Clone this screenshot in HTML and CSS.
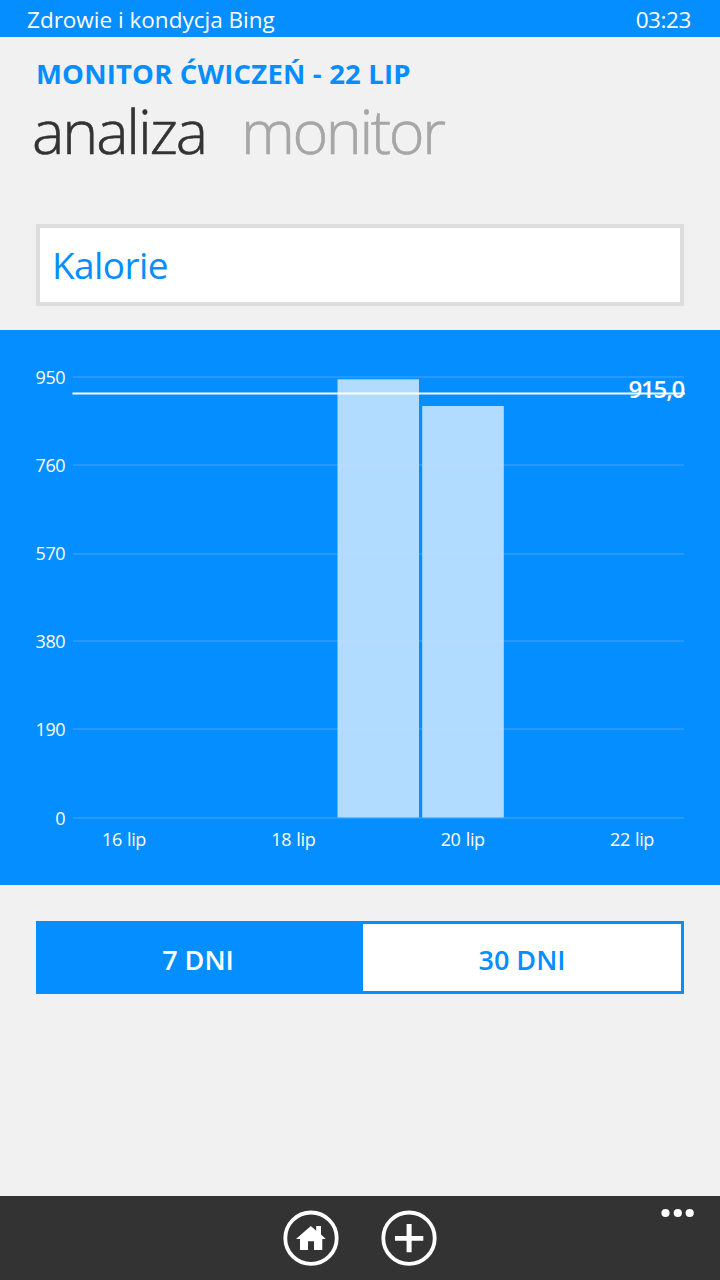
FILE: index.html
```
<!DOCTYPE html>
<html lang="pl">
<head>
    <meta charset="UTF-8">
    <meta name="viewport" content="width=device-width, initial-scale=1.0">
    <title>Zdrowie i kondycja Bing</title>
    <link rel="stylesheet" href="styles.css">
</head>
<body>
    <div class="status-bar">
        <span class="app-name">Zdrowie i kondycja Bing</span>
        <span class="clock">03:23</span>
    </div>

    <header>
        <h1>MONITOR ĆWICZEŃ - 22 LIP</h1>
        <nav class="pivot">
            <a class="pivot-item active">analiza</a>
            <a class="pivot-item">monitor</a>
        </nav>
    </header>

    <div class="picker">Kalorie</div>

    <div class="chart">
        <svg width="720" height="555" viewBox="0 0 720 555">
            <!-- bars -->
            <g class="bars">
                <rect x="337.5" y="49.3" width="81.5" height="438.2"/>
                <rect x="422.2" y="76" width="81.6" height="411.5"/>
            </g>

            <!-- grid lines -->
            <g class="grid">
                <path d="M73 47H684"/>
                <path d="M73 135H684"/>
                <path d="M73 224H684"/>
                <path d="M73 311H684"/>
                <path d="M73 399H684"/>
                <path d="M73 488H684"/>
            </g>

            <g class="y-labels">
                <text x="65" y="53.5">950</text>
                <text x="65" y="141.5">760</text>
                <text x="65" y="229.5">570</text>
                <text x="65" y="317.5">380</text>
                <text x="65" y="405.5">190</text>
                <text x="65" y="494.5">0</text>
            </g>

            <g class="x-labels">
                <text x="124" y="516">16 lip</text>
                <text x="293.3" y="516">18 lip</text>
                <text x="462.7" y="516">20 lip</text>
                <text x="632" y="516">22 lip</text>
            </g>

            <!-- average -->
            <path class="average" d="M72.5 63.5H685"/>
            <text class="average-value" x="684" y="67.5">915,0</text>
        </svg>
    </div>

    <div class="range">
        <button class="range-btn selected">7 DNI</button>
        <button class="range-btn">30 DNI</button>
    </div>

    <footer class="app-bar">
        <button class="icon-btn">
            <svg width="56" height="56" viewBox="0 0 56 56">
                <circle cx="28" cy="28.2" r="25.7"/>
                <path d="M27.8 16L13 29H17V40H25V31.3H31V40H39.3V29H42.8L38 24.6V16H33.2V20.7Z"/>
            </svg>
        </button>
        <button class="icon-btn">
            <svg width="56" height="56" viewBox="0 0 56 56">
                <circle cx="28" cy="28.2" r="25.7"/>
                <path d="M25.6 14H30.6V26H42.3V30.8H30.6V42.3H25.6V30.8H14V26H25.6Z"/>
            </svg>
        </button>
        <button class="more-btn">
            <svg width="34" height="10" viewBox="0 0 34 10">
                <circle cx="4.5" cy="5" r="4.1"/>
                <circle cx="16.8" cy="5" r="4.1"/>
                <circle cx="28.7" cy="5" r="4.1"/>
            </svg>
        </button>
    </footer>
</body>
</html>
```
FILE: styles.css
```
* {
    box-sizing: border-box;
}
body {
    margin: 0;
    height: 1280px;
    display: flex;
    flex-direction: column;
    font-family: "Open Sans", "Noto Sans", sans-serif;
    background-color: #f1f1f1;
    overflow: hidden;
}
button {
    border: none;
    padding: 0;
    background: none;
    font-family: inherit;
}
svg {
    display: block;
}
.status-bar {
    display: flex;
    justify-content: space-between;
    height: 37px;
    padding: 1px 29px 0 27px;
    background-color: #058eff;
    color: white;
    font-size: 22.5px;
    line-height: 37px;
}
.clock {
    letter-spacing: -0.4px;
}
header {
    height: 187px;
    padding: 20px 36px 0;
}
h1 {
    margin: 0 0 3px;
    color: #058eff;
    font-size: 27.5px;
    font-weight: bold;
    line-height: 34px;
    letter-spacing: 0.18px;
    white-space: nowrap;
}
.pivot {
    display: flex;
    gap: 35px;
    margin-left: -4px;
}
.pivot-item {
    color: #a6a6a6;
    font-size: 61px;
    font-weight: 300;
    line-height: 73px;
    letter-spacing: -2.4px;
    -webkit-text-stroke: 0.6px;
}
.pivot-item.active {
    color: #333;
    letter-spacing: -2.1px;
}
.picker {
    height: 82px;
    margin: 0 36px 24px;
    padding-left: 12px;
    border: 4px solid #ddd;
    background-color: white;
    color: #058eff;
    font-size: 37px;
    line-height: 74px;
    letter-spacing: -0.6px;
}
.chart {
    height: 555px;
    background-color: #058eff;
}
.chart text {
    fill: white;
    font-size: 18px;
    letter-spacing: -0.5px;
}
.chart .x-labels text {
    letter-spacing: -0.4px;
    word-spacing: 1px;
}
.bars {
    fill: #b2dcff;
}
.grid {
    fill: none;
    stroke: #c8dcf0;
    stroke-opacity: 0.16;
    stroke-width: 2;
}
.y-labels {
    text-anchor: end;
}
.x-labels {
    text-anchor: middle;
}
.average {
    fill: none;
    stroke: white;
    stroke-width: 2;
}
.chart .average-value {
    font-size: 24px;
    font-weight: 600;
    letter-spacing: -1.2px;
    text-anchor: end;
}
.range {
    display: flex;
    height: 73px;
    margin: 36px 36px 0;
    border: 3px solid #058eff;
}
.range-btn {
    flex: 1;
    padding-top: 4px;
    background-color: white;
    color: #058eff;
    font-size: 27px;
    font-weight: 600;
    line-height: 63px;
}
.range-btn.selected {
    flex: 0 0 324px;
    padding-right: 6px;
    background-color: #058eff;
    color: white;
}
.app-bar {
    position: relative;
    display: flex;
    justify-content: center;
    gap: 42px;
    height: 84px;
    margin-top: auto;
    padding-top: 14px;
    background-color: #333;
}
.icon-btn {
    width: 56px;
    height: 56px;
}
.icon-btn circle {
    fill: none;
    stroke: white;
    stroke-width: 3.8;
}
.icon-btn path,
.more-btn circle {
    fill: white;
}
.more-btn {
    position: absolute;
    top: 12px;
    right: 25px;
}
```
